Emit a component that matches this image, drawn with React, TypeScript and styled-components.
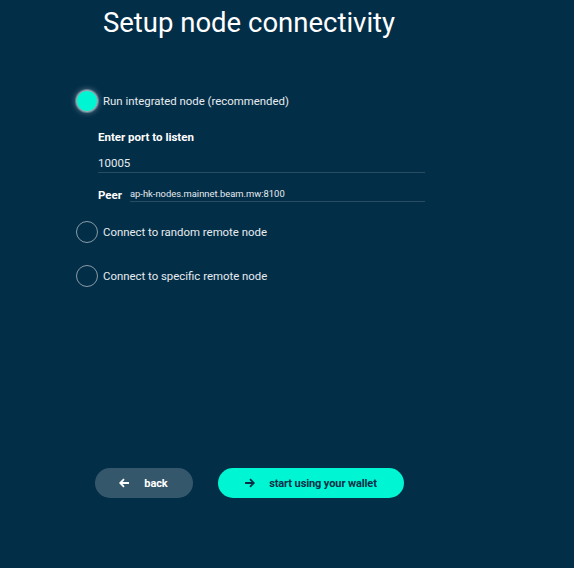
import * as React from "react";
import styled, { createGlobalStyle } from "styled-components";

const GlobalStyle = createGlobalStyle`
	html, body {
		margin: 0;
		padding: 0;
		background: #032e48;
	}
	body {
		font-family: Roboto, "Noto Sans", sans-serif;
		color: #ffffff;
	}
`;

const Page = styled.div`
	width: 498px;
	height: 568px;
	display: flex;
	flex-direction: column;
	background: #032e48;
`;

const Title = styled.h1`
	margin: 5px 0 0 0;
	font-family: Roboto, sans-serif;
	font-weight: 400;
	font-size: 27.5px;
	line-height: 36px;
	text-align: center;
	color: #ffffff;
`;

const Options = styled.div`
	display: flex;
	flex-direction: column;
	margin: 49px 0 0 76px;
	width: 350px;
`;

const OptionRow = styled.label<{ $gap?: number }>`
	display: flex;
	align-items: center;
	gap: 5px;
	height: 22px;
	margin-top: ${(p) => p.$gap ?? 0}px;
	cursor: pointer;
`;

const Radio = styled.span<{ $checked?: boolean }>`
	box-sizing: border-box;
	width: 22px;
	height: 22px;
	border-radius: 50%;
	border: 1.5px solid ${(p) => (p.$checked ? "#9aa9b3" : "#8a9ba7")};
	background: ${(p) => (p.$checked ? "#00f6d2" : "transparent")};
	box-shadow: ${(p) =>
		p.$checked ? "0 0 0 1px rgba(255,255,255,0.25), 0 0 6px rgba(255,255,255,0.45)" : "none"};
`;

const OptionLabel = styled.span`
	font-family: Roboto, sans-serif;
	font-size: 11.4px;
	color: #e6ecef;
`;

const SubForm = styled.div`
	display: flex;
	flex-direction: column;
	margin-left: 22px;
	width: 327px;
`;

const FieldTitle = styled.div`
	margin-top: 17px;
	font-family: Roboto, sans-serif;
	font-weight: 700;
	font-size: 11.5px;
	line-height: 16px;
	color: #ffffff;
`;

const FieldInput = styled.div`
	margin-top: 11px;
	padding-bottom: 1px;
	font-family: Roboto, sans-serif;
	font-size: 11.5px;
	line-height: 15px;
	color: #e6ecef;
	border-bottom: 1px solid rgba(255, 255, 255, 0.15);
`;

const PeerRow = styled.div`
	display: flex;
	align-items: flex-end;
	gap: 8px;
	margin-top: 14px;
`;

const PeerLabel = styled.span`
	font-family: Roboto, sans-serif;
	font-weight: 700;
	font-size: 11.5px;
	line-height: 16px;
	margin-bottom: -1px;
`;

const PeerValue = styled.div`
	flex: 1;
	font-family: Roboto, sans-serif;
	font-size: 9.4px;
	line-height: 14px;
	padding-bottom: 0;
	color: #e6ecef;
	border-bottom: 1px solid rgba(255, 255, 255, 0.15);
`;

const Buttons = styled.div`
	display: flex;
	justify-content: center;
	gap: 25px;
	margin-top: auto;
	margin-bottom: 70px;
`;

const Button = styled.button<{ $primary?: boolean }>`
	display: flex;
	align-items: center;
	justify-content: center;
	gap: 14px;
	height: 30px;
	padding: 0;
	width: ${(p) => (p.$primary ? 186 : 98)}px;
	border: none;
	border-radius: 15px;
	background: ${(p) => (p.$primary ? "#00f6d2" : "rgba(255, 255, 255, 0.2)")};
	color: ${(p) => (p.$primary ? "#032e48" : "#ffffff")};
	font-family: Roboto, sans-serif;
	font-weight: 700;
	font-size: 11px;
	letter-spacing: -0.1px;
	cursor: pointer;
`;

const Arrow = ({ left }: { left?: boolean }) => (
	<svg width="11" height="10" viewBox="0 0 11 10" fill="none">
		{left ? (
			<path d="M10 5H1.5M5 1.2L1.2 5L5 8.8" stroke="currentColor" strokeWidth="1.8" />
		) : (
			<path d="M1 5H9.5M6 1.2L9.8 5L6 8.8" stroke="currentColor" strokeWidth="1.8" />
		)}
	</svg>
);

export default function App() {
	return (
		<>
			<GlobalStyle />
			<Page>
				<Title>Setup node connectivity</Title>
				<Options>
					<OptionRow>
						<Radio $checked />
						<OptionLabel>Run integrated node (recommended)</OptionLabel>
					</OptionRow>
					<SubForm>
						<FieldTitle>Enter port to listen</FieldTitle>
						<FieldInput>10005</FieldInput>
						<PeerRow>
							<PeerLabel>Peer</PeerLabel>
							<PeerValue>ap-hk-nodes.mainnet.beam.mw:8100</PeerValue>
						</PeerRow>
					</SubForm>
					<OptionRow $gap={19}>
						<Radio />
						<OptionLabel>Connect to random remote node</OptionLabel>
					</OptionRow>
					<OptionRow $gap={22}>
						<Radio />
						<OptionLabel>Connect to specific remote node</OptionLabel>
					</OptionRow>
				</Options>
				<Buttons>
					<Button>
						<Arrow left />
						<span>back</span>
					</Button>
					<Button $primary>
						<Arrow />
						<span>start using your wallet</span>
					</Button>
				</Buttons>
			</Page>
		</>
	);
}
